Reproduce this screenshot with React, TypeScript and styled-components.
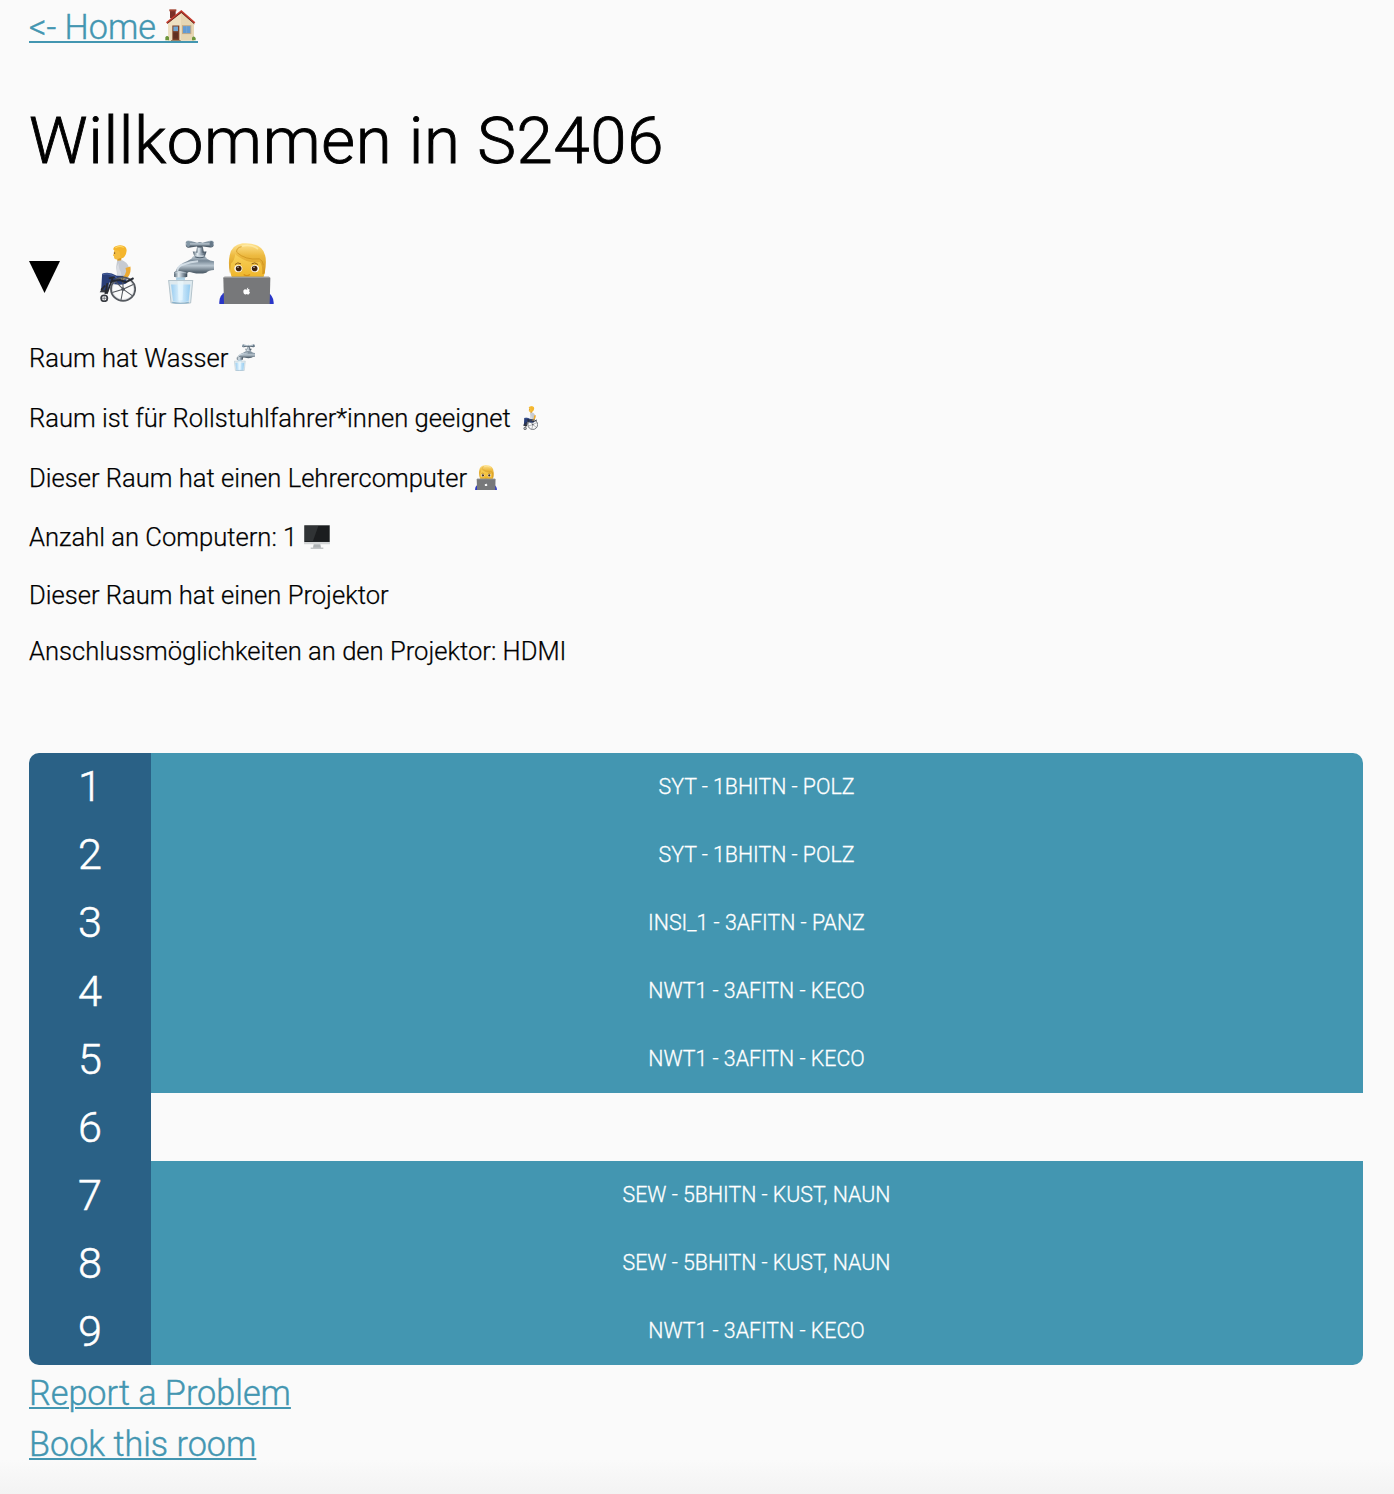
import React from "react";
import styled, { createGlobalStyle } from "styled-components";

const GlobalStyle = createGlobalStyle`
  * { box-sizing: border-box; }
  body { margin: 0; background: #fafafa; color: #000; font-family: Roboto, "Liberation Sans", sans-serif; }
`;

const Page = styled.main`
  width: 100%;
  height: 1494px;
  padding: 6px 31px 0 29px;
  display: flex;
  flex-direction: column;
  align-items: flex-start;
  overflow: hidden;
  background: linear-gradient(to bottom, #fafafa 1460px, #f3f3f3 1494px);
`;

const HomeLink = styled.a`
  display: flex;
  align-items: flex-end;
  flex: none;
  width: 169px;
  height: 37px;
  border-bottom: 2px solid #4396b1;
  color: #4396b1;
  font-size: 34.2px;
  font-weight: 300;
  -webkit-text-stroke: 0.4px #4396b1;
  line-height: 39px;
  white-space: pre;
  text-decoration: none;
`;

const HomeLabel = styled.span`
  width: 136px;
  height: 35px;
  line-height: 42px;
`;

const Title = styled.h1`
  margin: 59px 0 0;
  height: 78px;
  line-height: 77px;
  font-size: 65.3px;
  font-weight: 300;
  letter-spacing: 0.66px;
  -webkit-text-stroke: 0.9px #000;
  white-space: nowrap;
`;

const Summary = styled.div`
  display: flex;
  align-items: flex-start;
  margin-top: 60px;
  height: 64px;
`;

const Icon = styled.svg<{ $w: number; $h: number; $left?: number; $top?: number }>`
  flex: none;
  display: block;
  width: ${(p) => p.$w}px;
  height: ${(p) => p.$h}px;
  margin-left: ${(p) => p.$left ?? 0}px;
  margin-top: ${(p) => p.$top ?? 0}px;
`;

const Features = styled.div`
  margin-top: 39px;
  height: 410px;
`;

const Feature = styled.p<{ $gap: number }>`
  display: flex;
  align-items: flex-start;
  margin: 0 0 ${(p) => p.$gap}px;
  height: 30px;
  line-height: 30px;
  font-size: 25.6px;
  font-weight: 300;
  -webkit-text-stroke: 0.25px #000;
  white-space: nowrap;
`;

const FeatureText = styled.span<{ $w?: number }>`
  width: ${(p) => (p.$w ? p.$w + "px" : "auto")};
`;

const Schedule = styled.div`
  width: 100%;
  flex: none;
  border-radius: 10px;
  overflow: hidden;
  color: #fff;
`;

const Row = styled.div`
  display: grid;
  grid-template-columns: 122px 1fr;
  height: 68px;
`;

const Period = styled.div<{ $line: number }>`
  background: #2a6186;
  font-size: 43.2px;
  font-weight: 300;
  -webkit-text-stroke: 0.5px #fff;
  line-height: ${(p) => p.$line}px;
  text-align: center;
`;

const Lesson = styled.div<{ $free: boolean }>`
  background: ${(p) => (p.$free ? "#fafafa" : "#4396b1")};
  font-size: 21.35px;
  font-weight: 300;
  -webkit-text-stroke: 0.3px #fff;
  line-height: 67px;
  padding-right: 1px;
  text-align: center;
`;

const Action = styled.a`
  flex: none;
  color: #4396b1;
  font-size: 34.2px;
  font-weight: 300;
  -webkit-text-stroke: 0.4px #4396b1;
  height: 51px;
  line-height: 57px;
  text-decoration: underline;
  text-decoration-thickness: 2px;
  text-underline-offset: 2px;
`;

type IconProps = { w: number; h: number; left?: number; top?: number };

const House = ({ w, h, left, top }: IconProps) => (
  <Icon $w={w} $h={h} $left={left} $top={top} viewBox="435 29 93 97" preserveAspectRatio="none">
    <path d="M450 57V33h17v22z" fill="#7b3026" />
    <path d="M448 30h21v6h-21z" fill="#a14331" />
    <path d="M445 70L483 37l39 34v54h-77z" fill="#e6d6b3" />
    <path d="M445 70L483 39v86h-38z" fill="#eee0c1" />
    <path d="M438 69L484 32l42 37-4 5-38-33-42 33z" fill="#c63c2e" />
    <path d="M442 73L484 39l39 35" fill="none" stroke="#542821" strokeWidth="2.5" />
    <path d="M457 79h21v44h-21z" fill="#7b4028" />
    <path d="M460 82h14v14h-14z" fill="#71a7d4" />
    <path d="M460 100h14v19h-14z" fill="#603022" />
    <path d="M486 78h28v27h-28z" fill="#c5a984" />
    <path d="M489 81h22v21h-22z" fill="#629bd4" />
    <path d="M500 81v21" stroke="#8fb3d0" strokeWidth="1.5" />
    <path d="M453 123h29v3h-29z" fill="#9b8166" />
    <path d="M436 124v-9q5-8 11 0v9zM516 124v-8q6-8 11 1v7z" fill="#6c963b" />
  </Icon>
);

const Wheelchair = ({ w, h, left, top }: IconProps) => (
  <Icon $w={w} $h={h} $left={left} $top={top} viewBox="242 44 106 169" preserveAspectRatio="none">
    <path d="M293 72l13-2v24l-11 2z" fill="#d9981f" />
    <path d="M286 58q-2 8-2 12l-2 5 3 2q-1 10 8 10l12-5 3-24z" fill="#f4bd40" />
    <path d="M283 58q-1-8 9-11 11-5 21 0 9 4 8 15-1 12-9 20l-7 2q-3-8-3-16-1-6-5-8-7 0-14-2z" fill="#f4b52c" />
    <path d="M289 52q12-7 24-1" stroke="#ffd96a" strokeWidth="3" fill="none" />
    <ellipse cx="287" cy="68" rx="1.4" ry="2.5" fill="#5c3820" />
    <path d="M294 91l15-2q13 6 18 19l-4 38-30-2q2-16-2-34z" fill="#c6cad1" />
    <path d="M302 93q-8 12 2 30l5 21h-15q2-20-2-35z" fill="#d9dce2" />
    <path d="M251 129q19-8 42 6l29 1-2 22q-21 9-49-3l-4 28-19-2z" fill="#293e78" />
    <path d="M253 131q18-5 40 10" stroke="#465f9b" strokeWidth="4" fill="none" />
    <path d="M318 112l14-4q3 18-7 31l-16 10-5-4 12-12 4-11z" fill="#edaa31" />
    <path d="M249 175l20 4-1 6-24-1z" fill="#363940" />
    <g fill="none" stroke="#55595f">
      <path d="M270 143l17-4m-27 25l-12 13m18-20l-6 32m22-49l-18 49" stroke="#27292e" strokeWidth="5" />
      <circle cx="311" cy="175" r="34.5" strokeWidth="5.5" />
      <circle cx="311" cy="175" r="31" stroke="#b7bac0" strokeWidth="1.5" />
      <path d="M311 175l-22-23m22 23l-31 10m31-10l-6 32m6-32l27 20m-27-20l29-14m-29 14l-1-34" strokeWidth="3" />
      <circle cx="257" cy="202" r="9" strokeWidth="5" stroke="#373a40" />
      <path d="M257 194v17m-8-9h17" strokeWidth="2" />
    </g>
    <path d="M279 151l23-3 17 6 22-12" fill="none" stroke="#242831" strokeWidth="6" />
    <circle cx="311" cy="175" r="5" fill="#4e535b" />
  </Icon>
);

const Faucet = ({ w, h, left, top }: IconProps) => (
  <Icon $w={w} $h={h} $left={left} $top={top} viewBox="446 32 136 190" preserveAspectRatio="none">
    <defs>
      <linearGradient id="pipe" x2="0" y2="1"><stop stopColor="#d3dde4" /><stop offset=".25" stopColor="#778896" /><stop offset=".48" stopColor="#b9c6d0" /><stop offset=".78" stopColor="#566571" /><stop offset="1" stopColor="#3f4b59" /></linearGradient>
      <linearGradient id="neck"><stop stopColor="#4f606e" /><stop offset=".35" stopColor="#e4edf2" /><stop offset=".65" stopColor="#8d9ba8" /><stop offset="1" stopColor="#344451" /></linearGradient>
      <linearGradient id="water"><stop stopColor="#9acdf0" /><stop offset=".45" stopColor="#def1fd" /><stop offset="1" stopColor="#94cbf0" /></linearGradient>
    </defs>
    <path d="M519 66h41l-5 15h-31z" fill="url(#neck)" />
    <path d="M516 87q3-9 12-9h24q7 3 9 10 9 7 21 7v26q-15 0-23 8-19 5-40 0-12-5-17 1v11h-36q-1-29 24-41 18-7 26-13z" fill="url(#pipe)" />
    <path d="M473 126q2-18 18-21 22-9 44-10" fill="none" stroke="#dfe9f0" strokeWidth="6" opacity=".8" />
    <path d="M525 82q15 6 30 0" stroke="#50606e" strokeWidth="3" fill="none" />
    <path d="M532 52h17l3 18h-23z" fill="url(#neck)" />
    <path d="M507 33l25 7q8-4 16 0l25-7q9 1 9 11 0 10-10 10l-23-3q-9 7-18 0l-24 4q-9 0-9-11t9-11z" fill="url(#pipe)" />
    <ellipse cx="506" cy="44" rx="5" ry="9" fill="#8296a5" /><ellipse cx="574" cy="44" rx="5" ry="9" fill="#667989" />
    <path d="M464 127q18-6 39 0v14q-20 7-39 0z" fill="url(#neck)" />
    <path d="M465 130q18-5 36 0" stroke="#ced9e1" strokeWidth="2" fill="none" />
    <path d="M470 143h26v12h-26z" fill="#adcfe3" />
    <path d="M447 151h73l-7 67q-30 7-58 0z" fill="#dce8ed" opacity=".9" />
    <path d="M455 164h57l-5 50q-22 6-46 0z" fill="url(#water)" />
    <path d="M474 150h18l-3 61h-12z" fill="#edfaff" opacity=".6" />
    <path d="M448 152h71l-6 66q-29 7-58 0z" fill="none" stroke="#b5c4cc" strokeWidth="3" />
    <path d="M458 217q23 5 50 0" stroke="#89b2cc" strokeWidth="3" fill="none" />
  </Icon>
);

const Technologist = ({ w, h, left, top }: IconProps) => (
  <Icon $w={w} $h={h} $left={left} $top={top} viewBox="597 38 165 184" preserveAspectRatio="none">
    <defs>
      <linearGradient id="face" x2="0" y2="1"><stop stopColor="#fad765" /><stop offset="1" stopColor="#edb021" /></linearGradient>
      <linearGradient id="hair" x2="0" y2="1"><stop stopColor="#ffe493" /><stop offset=".4" stopColor="#edba40" /><stop offset="1" stopColor="#d2931a" /></linearGradient>
    </defs>
    <path d="M598 222q-2-29 22-38h118q25 12 23 38z" fill="#2936c8" />
    <path d="M631 92q2-36 50-36t52 38q8 47-15 61h-72q-21-19-15-63z" fill="url(#face)" />
    <path d="M630 130q-6-31-1-54 5-32 38-37 37-3 56 14 22 19 11 77l-7 2q1-29-8-37-36 4-62-15-8-5-11-9-3 22-13 29-2 12-3 30z" fill="url(#hair)" />
    <path d="M650 65q-1-13 15-16m-15 17q25 24 68 20 11 4 12 19" stroke="#c98d18" strokeWidth="2" fill="none" />
    <path d="M665 48q28-8 49 8" stroke="#fff1b7" strokeWidth="5" opacity=".6" fill="none" />
    <path d="M645 103q8-9 18-2m32 0q9-7 19 2" fill="none" stroke="#8c5b16" strokeWidth="3" />
    <ellipse cx="655" cy="115" rx="12" ry="11" fill="#fff9ee" /><ellipse cx="705" cy="115" rx="12" ry="11" fill="#fff9ee" />
    <circle cx="656" cy="115" r="8.5" fill="#3d210e" /><circle cx="704" cy="115" r="8.5" fill="#3d210e" />
    <circle cx="654" cy="111" r="2" fill="#fff" /><circle cx="702" cy="111" r="2" fill="#fff" />
    <path d="M671 133q9 7 19 0" fill="none" stroke="#d99115" strokeWidth="4" />
    <path d="M610 144q0-4 5-4h131q5 0 5 5l-2 77H612z" fill="#77787a" />
    <path d="M610 144q0-4 5-4h131q5 0 5 3H610z" fill="#a6a6a6" />
    <path d="M680 179c-6-4-10 0-10 5 0 6 4 10 7 9q3-2 6 0c3 1 5-2 7-6q-5-3-1-8-4-4-9 0zM680 178q0-5 5-6 0 5-5 6z" fill="#fff" />
  </Icon>
);

const Monitor = ({ w, h, left, top }: IconProps) => (
  <Icon $w={w} $h={h} $left={left} $top={top} viewBox="0 0 78 72" preserveAspectRatio="none">
    <path d="M0 2q0-2 2-2h74q2 0 2 2v56H0z" fill="#d3d5d6" />
    <path d="M1 1h76v50H1z" fill="#202325" /><path d="M3 3h72v45H3z" fill="#303335" />
    <path d="M43 3h32v45H27z" fill="#1b1d1f" />
    <path d="M29 58h20l2 10H27z" fill="#aeb2b4" /><path d="M20 68h38v3H20z" fill="#a7abad" />
  </Icon>
);

const Disclosure = () => (
  <Icon $w={31} $h={32} $top={21} viewBox="0 0 31 32"><path d="M0 0h31L15.5 32z" fill="#000" /></Icon>
);

const lessons = [
  "SYT - 1BHITN - POLZ",
  "SYT - 1BHITN - POLZ",
  "INSI_1 - 3AFITN - PANZ",
  "NWT1 - 3AFITN - KECO",
  "NWT1 - 3AFITN - KECO",
  "",
  "SEW - 5BHITN - KUST, NAUN",
  "SEW - 5BHITN - KUST, NAUN",
  "NWT1 - 3AFITN - KECO",
];

export default function App() {
  return (
    <>
      <GlobalStyle />
      <Page>
        <HomeLink href="#"><HomeLabel>{"<- Home "}</HomeLabel><House w={31} h={32} /></HomeLink>
        <Title>Willkommen in S2406</Title>
        <Summary>
          <Disclosure />
          <Wheelchair w={37} h={57} left={39} top={5} />
          <Faucet w={46} h={64} left={32} />
          <Technologist w={55} h={61} left={5} top={3} />
        </Summary>
        <Features>
          <Feature $gap={30}><FeatureText $w={205}>Raum hat Wasser</FeatureText><Faucet w={21} h={27} top={1} /></Feature>
          <Feature $gap={30}><FeatureText $w={494}>Raum ist für Rollstuhlfahrer*innen geeignet</FeatureText><Wheelchair w={15} h={24} top={3} /></Feature>
          <Feature $gap={29}><FeatureText $w={446}>Dieser Raum hat einen Lehrercomputer</FeatureText><Technologist w={22} h={25} top={2} /></Feature>
          <Feature $gap={28}><FeatureText $w={275}>Anzahl an Computern: 1</FeatureText><Monitor w={26} h={24} top={3} /></Feature>
          <Feature $gap={26}><FeatureText>Dieser Raum hat einen Projektor</FeatureText></Feature>
          <Feature $gap={0}><FeatureText>Anschlussmöglichkeiten an den Projektor: HDMI</FeatureText></Feature>
        </Features>
        <Schedule>
          {lessons.map((lesson, i) => (
            <Row key={i}><Period $line={i < 3 ? 67 : 69}>{i + 1}</Period><Lesson $free={!lesson}>{lesson}</Lesson></Row>
          ))}
        </Schedule>
        <Action href="#">Report a Problem</Action>
        <Action href="#">Book this room</Action>
      </Page>
    </>
  );
}
